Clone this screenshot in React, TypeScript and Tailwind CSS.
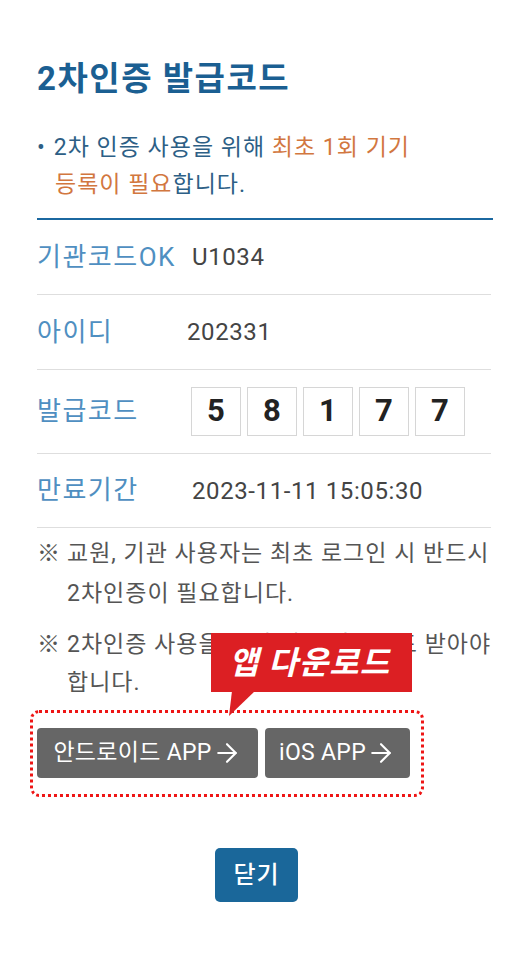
import { ArrowRight } from 'lucide-react'

const font = { fontFamily: 'Roboto, "Noto Sans CJK KR", sans-serif' }

type Row = {
  label: string
  value?: string
  height: string
  valueClass: string
}

const rows: Row[] = [
  { label: '기관코드OK', value: 'U1034', height: 'h-[75px]', valueClass: 'pl-[17px]' },
  { label: '아이디', value: '202331', height: 'h-[75px]', valueClass: 'pl-[12px]' },
  { label: '발급코드', height: 'h-[84px]', valueClass: 'pl-[16px]' },
  { label: '만료기간', value: '2023-11-11 15:05:30', height: 'h-[74px]', valueClass: 'pl-[17px]' },
]

const digits = ['5', '8', '1', '7', '7']

export default function App() {
  return (
    <div className="min-h-[969px] w-[519px] overflow-hidden bg-white" style={font}>
      <div className="pl-[37px] pt-[55px]">
        <div className="w-[456px] overflow-hidden">
          <h1 className="text-[33px] font-bold leading-[48px] tracking-[1.5px] text-[#1b5f92]">
            2차인증 발급코드
          </h1>

          <div className="mt-[26px] border-b-2 border-[#1b68a0] pb-[15px] text-[23px] leading-[37px] tracking-[1px] text-[#2d5f86]">
            <p>
              <span className="mr-[8px]">•</span>2차 인증 사용을 위해{' '}
              <span className="text-[#d2773f]">최초 1회 기기</span>
            </p>
            <p className="pl-[18px]">
              <span className="text-[#d2773f]">등록이 필요</span>합니다.
            </p>
          </div>

          <div className="w-[454px]">
            {rows.map((row) => (
              <div key={row.label} className={`flex items-center border-b border-[#dedede] ${row.height}`}>
                <div className="w-[138px] shrink-0 whitespace-nowrap text-[26px] tracking-[1.5px] text-[#4f8fc1]">
                  {row.label}
                </div>
                <div className={row.valueClass}>
                  {row.value ? (
                    <span className="text-[24px] tracking-[0.6px] text-[#444]">{row.value}</span>
                  ) : (
                    <div className="flex gap-[6px]">
                      {digits.map((d, i) => (
                        <div
                          key={i}
                          className="flex h-[49px] w-[50px] items-center justify-center border border-[#d6d6d6] text-[31px] font-bold text-[#222]"
                        >
                          {d}
                        </div>
                      ))}
                    </div>
                  )}
                </div>
              </div>
            ))}
          </div>

          <div className="mt-[6px] flex whitespace-nowrap text-[23px] leading-[40px] tracking-[1px] text-[#555]">
            <span className="w-[30px] shrink-0 tracking-normal">※</span>
            <p>
              교원, 기관 사용자는 최초 로그인 시 반드시
              <br />
              2차인증이 필요합니다.
            </p>
          </div>

          <div className="mt-[12px] flex whitespace-nowrap text-[23px] leading-[38px] tracking-[1px] text-[#555]">
            <span className="w-[30px] shrink-0 tracking-normal">※</span>
            <p>
              2차인증 사용을 위해 앱을 다운로드 받아야
              <br />
              합니다.
            </p>
          </div>
        </div>
      </div>

      <div className="relative ml-[30px] mt-[8px] w-[394px]">
        {/* callout over the note */}
        <div className="absolute left-[181px] top-[-77px] z-10">
          <div className="flex h-[59px] w-[201px] items-center pl-[18px] text-[32px] font-bold italic tracking-[1px] text-white bg-[#dc1f23]">
            앱 다운로드
          </div>
          <svg className="absolute left-[16px] top-[58px]" width="30" height="26" viewBox="0 0 30 26">
            <polygon points="5,0 28,0 2,25" fill="#dc1f23" />
          </svg>
        </div>

        <div className="flex h-[87px] gap-[7px] rounded-[9px] border-[3px] border-dotted border-[#ee1515] pl-[4px] pt-[15px]">
          <button className="flex h-[50px] w-[221px] items-center justify-center gap-0 rounded-[4px] bg-[#666] text-[23px] tracking-[0.3px] text-white">
            안드로이드 APP
            <ArrowRight size={30} strokeWidth={1.7} />
          </button>
          <button className="flex h-[50px] w-[145px] items-center justify-center gap-0 rounded-[4px] bg-[#666] text-[23px] tracking-[0.3px] text-white">
            iOS APP
            <ArrowRight size={30} strokeWidth={1.7} />
          </button>
        </div>
      </div>

      <div className="mt-[51px] flex justify-center pr-[6px]">
        <button className="h-[54px] w-[83px] rounded-[5px] bg-[#1a679a] text-[24px] font-medium tracking-[1px] text-white">
          닫기
        </button>
      </div>
    </div>
  )
}
